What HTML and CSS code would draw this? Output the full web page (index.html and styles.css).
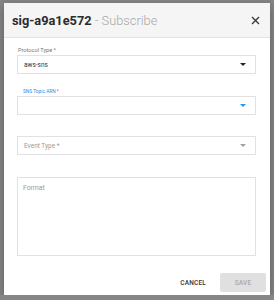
FILE: index.html
```html
<!DOCTYPE html>
<html lang="en">
<head>
  <meta charset="UTF-8">
  <title>Subscribe</title>
  <link rel="stylesheet" href="styles.css">
</head>
<body>
  <div class="dialog">
    <!-- header -->
    <div class="dialog-head">
      <span class="title"><b>sig-a9a1e572</b> <span class="sub">- Subscribe</span></span>
      <svg class="close" width="9" height="9" viewBox="0 0 9 9">
        <path d="M1 1L8 8M8 1L1 8" stroke="#3a3a3a" stroke-width="1.4" fill="none"/>
      </svg>
    </div>
    <!-- form -->
    <div class="dialog-body">
      <div class="field f-protocol">
        <div class="label">Protocol Type *</div>
        <div class="box">
          <span class="value">aws-sns</span>
          <span class="arrow"></span>
        </div>
      </div>
      <div class="field f-topic">
        <div class="label focus">SNS Topic ARN <span class="req">*</span></div>
        <div class="box">
          <span class="value"></span>
          <span class="arrow blue"></span>
        </div>
      </div>
      <div class="field f-event">
        <div class="box">
          <span class="placeholder">Event Type *</span>
          <span class="arrow grey"></span>
        </div>
      </div>
      <div class="field f-format">
        <div class="box area">
          <span class="placeholder">Format</span>
        </div>
      </div>
    </div>
    <div class="dialog-foot">
      <button class="btn cancel">Cancel</button>
      <button class="btn save" disabled>Save</button>
    </div>
  </div>
</body>
</html>
```

FILE: styles.css
```css
body {
  margin: 0;
  padding: 3px 4px 0 4px;
  background: #868686;
  font-family: Roboto, 'Liberation Sans', sans-serif;
  color: #333;
}
.dialog {
  width: 266px;
  height: 292px;
  background: #fff;
  box-shadow: 0 3px 10px #0000004d;
  display: flex;
  flex-direction: column;
}
.dialog-head {
  height: 34px;
  background: #f5f5f5;
  border-bottom: 1px solid #e3e3e3;
  display: flex;
  align-items: center;
  padding: 0 10px 0 8px;
}
.title {
  flex: 1;
  font-size: 12.8px;
  color: #2b2b2b;
  white-space: nowrap;
}
.title b { font-weight: 700; }
.title .sub {
  color: #a8a8a8;
  font-weight: 300;
}
.close { display: block; }

.dialog-body {
  padding: 9px 14px 0 13px;
}
.label {
  font-size: 5.6px;
  line-height: 7px;
  color: #777;
  padding-left: 1px;
  margin-bottom: 1px;
}
.label.focus {
  color: #2a8de8;
  font-size: 4.8px;
  line-height: 6px;
  padding-left: 6px;
}
.label .req { color: #e53935; }
.box {
  height: 17px;
  border: 1px solid #e2e2e2;
  display: flex;
  align-items: center;
  padding: 0 9px 0 6px;
  font-size: 6.5px;
}
.box .value { flex: 1; color: #333; }
.box .placeholder { flex: 1; color: #9a9a9a; }
.arrow {
  width: 0;
  height: 0;
  border-left: 3px solid transparent;
  border-right: 3px solid transparent;
  border-top: 3px solid #222;
}
.arrow.blue { border-top-color: #2196f3; }
.arrow.grey { border-top-color: #a0a0a0; }

.f-topic { margin-top: 15px; }
.f-event { margin-top: 21px; }
.f-format { margin-top: 22px; }
.box.area {
  height: 71px;
  align-items: flex-start;
  padding-top: 6px;
  padding-left: 5px;
  font-size: 6.8px;
}

.dialog-foot {
  margin-top: auto;
  display: flex;
  justify-content: flex-end;
  align-items: center;
  gap: 14px;
  padding: 0 4px 3px 0;
}
.btn {
  font-family: inherit;
  font-size: 6.5px;
  font-weight: 500;
  text-transform: uppercase;
  letter-spacing: 0.03em;
  border: none;
  background: none;
  padding: 0;
  height: 19px;
}
.btn.cancel { color: #333; }
.btn.save {
  width: 46px;
  background: #e0e0e0;
  color: #a9a9a9;
  border-radius: 2px;
}
```
